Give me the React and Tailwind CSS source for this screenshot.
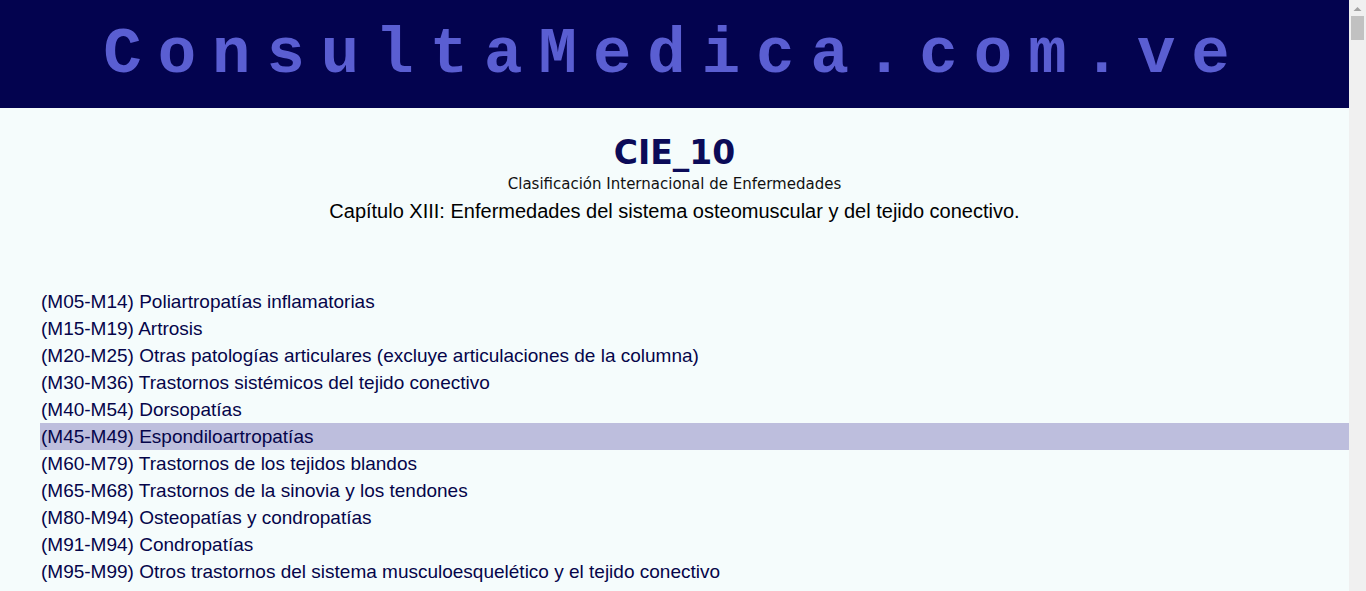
export default function App() {
  const items = [
    ["(M05-M14)", "Poliartropatías inflamatorias"],
    ["(M15-M19)", "Artrosis"],
    ["(M20-M25)", "Otras patologías articulares (excluye articulaciones de la columna)"],
    ["(M30-M36)", "Trastornos sistémicos del tejido conectivo"],
    ["(M40-M54)", "Dorsopatías"],
    ["(M45-M49)", "Espondiloartropatías"],
    ["(M60-M79)", "Trastornos de los tejidos blandos"],
    ["(M65-M68)", "Trastornos de la sinovia y los tendones"],
    ["(M80-M94)", "Osteopatías y condropatías"],
    ["(M91-M94)", "Condropatías"],
    ["(M95-M99)", "Otros trastornos del sistema musculoesquelético y el tejido conectivo"],
  ];
  return (
    <div className="min-h-[700px] bg-[#f5fcfc]">
      <div className="w-[1349px]">
        <div className="h-[108px] bg-[#03034f] flex items-center justify-center">
          <div className="font-['Liberation_Mono',monospace] font-bold text-[64px] leading-none tracking-[16px] text-[#5a5ed2] mt-[2px]">
            ConsultaMedica.com.ve
          </div>
        </div>
        <div className="flex flex-col items-center pt-[26px]">
          <div className="font-['DejaVu_Sans',sans-serif] font-bold text-[33px] leading-[38px] text-[#0b0b58]">
            CIE_10
          </div>
          <div className="font-['DejaVu_Sans',sans-serif] text-[15px] leading-[18px] text-[#111] mt-[3px]">
            Clasificación Internacional de Enfermedades
          </div>
          <div className="font-['Liberation_Sans',sans-serif] text-[20px] leading-[24px] text-black mt-[6px]">
            Capítulo XIII: Enfermedades del sistema osteomuscular y del tejido conectivo.
          </div>
        </div>
        <div className="mt-[65px] pl-[40px] font-['Liberation_Sans',sans-serif] text-[19px] text-[#05054a]">
          {items.map(([code, name], i) => (
            <div
              key={code}
              className={
                "h-[27px] leading-[27px] pl-[1px] " + (i === 5 ? "bg-[#bdbedd]" : "")
              }
            >
              {code} {name}
            </div>
          ))}
        </div>
      </div>
      <div className="fixed top-0 right-0 w-[17px] h-full bg-[#f0f0f0] flex flex-col items-center">
        <svg width="17" height="15" viewBox="0 0 17 15" className="mt-[1px]">
          <path d="M4.5 10 L8.5 6 L12.5 10 Z" fill="#a3a3a3" />
        </svg>
        <div className="w-[13px] h-[24px] bg-[#c1c1c1]" />
      </div>
    </div>
  );
}
